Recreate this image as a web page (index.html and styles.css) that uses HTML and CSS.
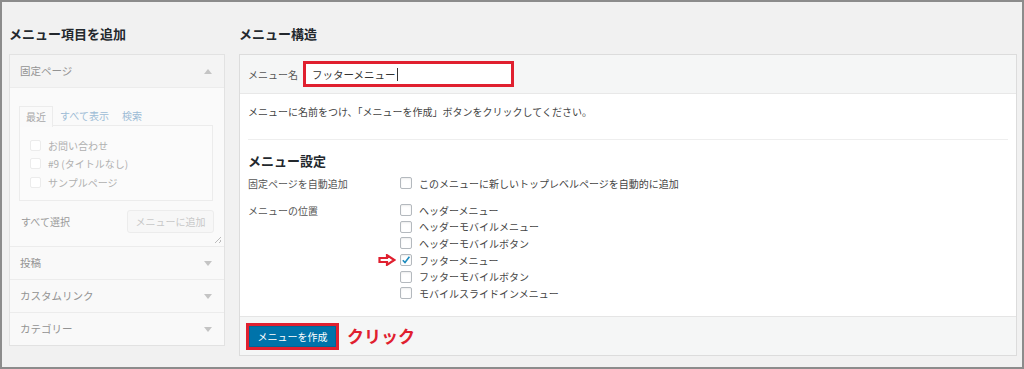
FILE: index.html
```html
<!doctype html>
<html>
    <head>
        <meta name="viewport" content="width=device-width, initial-scale=1.0">
        <title>メニュー - 管理画面</title>
        <link rel="stylesheet" href="styles.css">
    </head>
    <body>
        <div class="screen">
            <div class="col-left">
                <h2 class="col-title">メニュー項目を追加</h2>
                <div class="side-box">
                    <div class="acc-head open">固定ページ<span class="acc-arrow up"></span></div>
                    <div class="acc-body">
                        <div class="tabs">
                            <span class="tab active">最近</span>
                            <span class="tab">すべて表示</span>
                            <span class="tab">検索</span>
                        </div>
                        <div class="tab-panel">
                            <div class="pick"><span class="cb faded"></span>お問い合わせ</div>
                            <div class="pick"><span class="cb faded"></span>#9 (タイトルなし)</div>
                            <div class="pick"><span class="cb faded"></span>サンプルページ</div>
                        </div>
                        <div class="add-row">
                            <span class="select-all">すべて選択</span>
                            <span class="add-btn">メニューに追加</span>
                        </div>
                        <span class="grip"></span>
                    </div>
                    <div class="acc-head">投稿<span class="acc-arrow"></span></div>
                    <div class="acc-head">カスタムリンク<span class="acc-arrow"></span></div>
                    <div class="acc-head last">カテゴリー<span class="acc-arrow"></span></div>
                </div>
            </div>

            <div class="col-right">
                <h2 class="col-title">メニュー構造</h2>
                <div class="menu-box">
                    <div class="menu-head">
                        <span class="name-label">メニュー名</span>
                        <div class="mark">
                            <div class="name-input">フッターメニュー<span class="caret"></span></div>
                        </div>
                    </div>

                    <div class="menu-body">
                        <p class="hint">メニューに名前をつけ、「メニューを作成」ボタンをクリックしてください。</p>
                        <div class="rule"></div>
                        <h3 class="settings-title">メニュー設定</h3>

                        <div class="setting">
                            <div class="setting-label">固定ページを自動追加</div>
                            <div class="options">
                                <div class="opt"><span class="cb"></span>このメニューに新しいトップレベルページを自動的に追加</div>
                            </div>
                        </div>

                        <div class="setting locations">
                            <div class="setting-label">メニューの位置</div>
                            <div class="options">
                                <div class="opt"><span class="cb"></span>ヘッダーメニュー</div>
                                <div class="opt"><span class="cb"></span>ヘッダーモバイルメニュー</div>
                                <div class="opt"><span class="cb"></span>ヘッダーモバイルボタン</div>
                                <div class="opt">
                                    <svg class="point" width="18" height="12" viewBox="0 0 18 12">
                                        <path d="M1.5 4 H9 V1.2 L16.3 6 L9 10.8 V8 H1.5 Z" fill="#fff" stroke="#e0202f" stroke-width="2.2" stroke-linejoin="miter"/>
                                    </svg>
                                    <span class="cb checked">
                                        <svg width="10" height="10" viewBox="0 0 10 10">
                                            <path d="M1.8 5.2 L4 7.6 L8.4 1.8" fill="none" stroke="#1e8cbe" stroke-width="1.6"/>
                                        </svg>
                                    </span>フッターメニュー
                                </div>
                                <div class="opt"><span class="cb"></span>フッターモバイルボタン</div>
                                <div class="opt"><span class="cb"></span>モバイルスライドインメニュー</div>
                            </div>
                        </div>
                    </div>

                    <div class="menu-foot">
                        <div class="mark">
                            <span class="save-btn">メニューを作成</span>
                        </div>
                        <span class="click-note">クリック</span>
                    </div>
                </div>
            </div>
        </div>
    </body>
</html>
```

FILE: styles.css
```css
body {
    margin: 0;
    padding: 0;
    font-family: "Noto Sans CJK JP", "Noto Sans", sans-serif;
    color: #444;
}

.screen {
    width: 1024px;
    height: 369px;
    box-sizing: border-box;
    border: 2px solid #8c8c8c;
    background-color: #f1f1f1;
    display: flex;
    gap: 14px;
    padding: 0 5px 0 7px;
}

.col-left {
    width: 216px;
}

.col-right {
    flex: 1;
}

.col-title {
    margin: 0;
    height: 52px;
    box-sizing: border-box;
    padding-top: 21px;
    line-height: 21px;
    font-size: 13px;
    font-weight: bold;
    color: #23282d;
}

/* left column */

.side-box {
    border: 1px solid #e2e2e2;
    background-color: #fafafa;
}

.acc-head {
    position: relative;
    height: 32px;
    line-height: 32px;
    padding: 0 10px;
    font-size: 10.5px;
    color: #939393;
    background-color: #f9f9f9;
    border-bottom: 1px solid #ececec;
}

.acc-head.open {
    background-color: #f4f4f4;
}

.acc-head.last {
    border-bottom: none;
}

.acc-arrow {
    position: absolute;
    right: 12px;
    top: 14px;
    border-left: 4px solid transparent;
    border-right: 4px solid transparent;
    border-top: 5px solid #c4c4c4;
}

.acc-arrow.up {
    border-top: none;
    border-bottom: 5px solid #c4c4c4;
}

.acc-body {
    position: relative;
    padding: 18px 11px 13px 9px;
    border-bottom: 1px solid #ececec;
}

.tabs {
    display: flex;
    gap: 1px;
    height: 20px;
    line-height: 20px;
    font-size: 10px;
}

.tab {
    padding: 0 6px;
    color: #9dbcd6;
}

.tab.active {
    color: #a8a8a8;
    border: 1px solid #ececec;
    border-bottom: none;
    background-color: #fafafa;
    line-height: 19px;
    height: 20px;
}

.tab-panel {
    border: 1px solid #ececec;
    background-color: #fbfbfb;
    padding: 10px 10px 8px;
    margin-top: -1px;
}

.pick {
    display: flex;
    align-items: center;
    height: 18.5px;
    font-size: 10px;
    color: #b0b0b0;
}

.pick .cb {
    margin-right: 7px;
}

.add-row {
    display: flex;
    align-items: center;
    justify-content: space-between;
    margin-top: 9px;
    padding-left: 2px;
}

.select-all {
    font-size: 10px;
    color: #999;
}

.add-btn {
    width: 87px;
    height: 23px;
    box-sizing: border-box;
    line-height: 21px;
    text-align: center;
    font-size: 10px;
    color: #c8c8c8;
    border: 1px solid #ececec;
    border-radius: 3px;
    background-color: #f7f7f7;
    margin-right: -1px;
}

.grip {
    position: absolute;
    right: 3px;
    bottom: 3px;
    width: 6px;
    height: 6px;
    background: linear-gradient(135deg, transparent 45%, #bbb 45%, #bbb 55%, transparent 55%, transparent 75%, #bbb 75%, #bbb 85%, transparent 85%);
}

/* checkboxes */

.cb {
    display: inline-flex;
    align-items: center;
    justify-content: center;
    width: 12px;
    height: 12px;
    box-sizing: border-box;
    border: 1px solid #b4b9be;
    border-radius: 2px;
    background-color: #fff;
    box-shadow: inset 0 1px 2px rgba(0, 0, 0, 0.08);
    flex-shrink: 0;
}

.cb.faded {
    width: 11px;
    height: 11px;
    border-color: #ececec;
    box-shadow: none;
}

/* right column */

.menu-box {
    border: 1px solid #dcdcdc;
    background-color: #fff;
}

.menu-head {
    display: flex;
    align-items: center;
    height: 38px;
    padding: 0 8px;
    background-color: #f5f6f6;
    border-bottom: 1px solid #e8e8e8;
}

.name-label {
    font-size: 10px;
    color: #555;
    margin-right: 5px;
}

.mark {
    border: 3px solid #e0202f;
}

.name-input {
    display: flex;
    align-items: center;
    width: 205px;
    height: 20px;
    padding-left: 6px;
    box-sizing: border-box;
    font-size: 10.5px;
    color: #333;
    background-color: #fff;
}

.caret {
    display: inline-block;
    width: 1px;
    height: 13px;
    margin-left: 1px;
    background-color: #333;
}

.menu-body {
    padding: 8px 8px 14px;
}

.hint {
    margin: 0;
    line-height: 20px;
    font-size: 10px;
    color: #444;
}

.rule {
    margin-top: 17px;
    border-top: 1px solid #eee;
}

.settings-title {
    margin: 0;
    padding-top: 10px;
    line-height: 22px;
    font-size: 13px;
    font-weight: bold;
    color: #23282d;
}

.setting {
    display: flex;
    margin-top: 3px;
}

.setting.locations {
    margin-top: 10px;
}

.setting-label {
    width: 152px;
    line-height: 17px;
    font-size: 10px;
    color: #555;
}

.options {
    flex: 1;
}

.opt {
    position: relative;
    display: flex;
    align-items: center;
    height: 16.6px;
    font-size: 10px;
    color: #444;
}

.opt .cb {
    margin-right: 7px;
}

.point {
    position: absolute;
    left: -22px;
    top: 2px;
}

.menu-foot {
    display: flex;
    align-items: center;
    gap: 8px;
    padding: 6px 6px 5px;
    background-color: #f5f6f6;
    border-top: 1px solid #e5e5e5;
}

.save-btn {
    display: block;
    width: 87px;
    height: 21px;
    line-height: 21px;
    text-align: center;
    font-size: 10px;
    color: #fff;
    background-color: #0073aa;
    box-shadow: inset 0 0 0 1px #006799;
}

.click-note {
    font-size: 17px;
    font-weight: bold;
    color: #e0202f;
    line-height: 20px;
}
```
